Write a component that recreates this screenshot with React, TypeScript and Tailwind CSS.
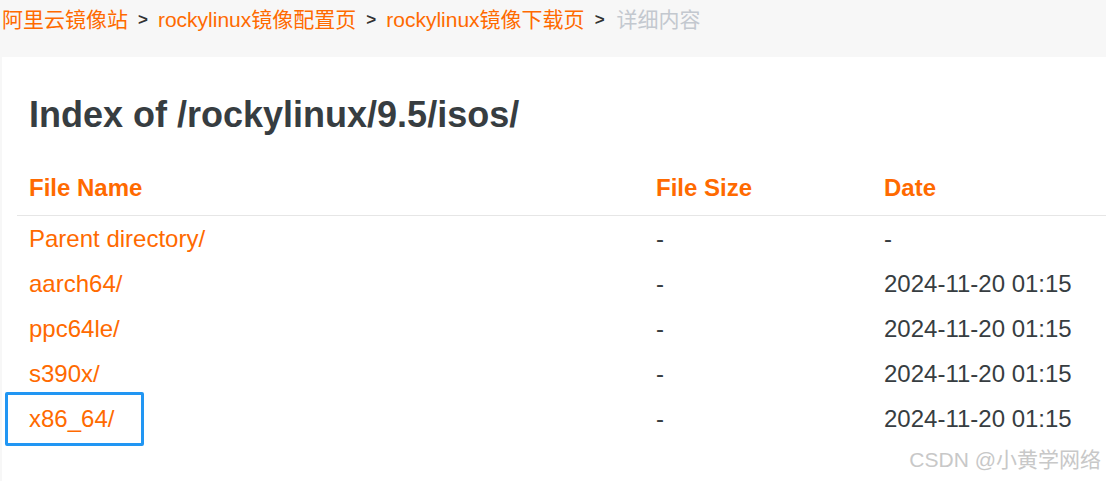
const crumbs = ["阿里云镜像站", "rockylinux镜像配置页", "rockylinux镜像下载页"];

const rows = [
  { name: "Parent directory/", size: "-", date: "-" },
  { name: "aarch64/", size: "-", date: "2024-11-20 01:15" },
  { name: "ppc64le/", size: "-", date: "2024-11-20 01:15" },
  { name: "s390x/", size: "-", date: "2024-11-20 01:15" },
  { name: "x86_64/", size: "-", date: "2024-11-20 01:15" },
];

export default function App() {
  return (
    <div
      className="relative w-[1106px] h-[481px] overflow-hidden bg-[#f7f7f7] flex flex-col"
      style={{ fontFamily: '"Liberation Sans", "Noto Sans CJK SC", Arial, sans-serif' }}
    >
      {/* breadcrumb */}
      <div className="h-[57px] flex items-start pl-[2px] text-[21px] leading-[39px]">
        {crumbs.map((c) => (
          <span key={c} className="flex items-start">
            <a className="text-[#ff6a00]">{c}</a>
            <span className="mx-[10px] text-[17px] text-[#333] font-bold">&gt;</span>
          </span>
        ))}
        <span className="ml-[2px] text-[#c3c8cf]">详细内容</span>
      </div>

      <div className="flex-1 ml-[2px] bg-white">
        <h1 className="pt-[36px] px-[27px] text-[36px] leading-[44px] font-bold text-[#373d41]">
          Index of /rockylinux/9.5/isos/
        </h1>

        <div className="mt-[28px] ml-[15px] w-[1200px] text-[24px] leading-[45px]">
          <div className="flex pb-[5px] border-b border-[#e6e6e6] font-bold text-[#ff6a00]">
            <div className="w-[627px] pl-[12px]">File Name</div>
            <div className="w-[228px] pl-[12px]">File Size</div>
            <div className="flex-1 pl-[12px]">Date</div>
          </div>
          {rows.map((r) => (
            <div key={r.name} className="flex h-[45px] text-[#373d41]">
              <div className="w-[627px] pl-[12px] text-[#ff6a00]">{r.name}</div>
              <div className="w-[228px] pl-[12px]">{r.size}</div>
              <div className="flex-1 pl-[12px]">{r.date}</div>
            </div>
          ))}
        </div>
      </div>

      {/* annotation box */}
      <div className="absolute left-[5px] top-[392px] w-[139px] h-[54px] border-[3px] border-[#2196f3] rounded-[2px]" />

      {/* watermark */}
      <div className="absolute right-[5px] top-[446px] text-[21px] leading-[28px] text-[#c8c8c8]">
        CSDN @小黄学网络
      </div>
    </div>
  );
}
